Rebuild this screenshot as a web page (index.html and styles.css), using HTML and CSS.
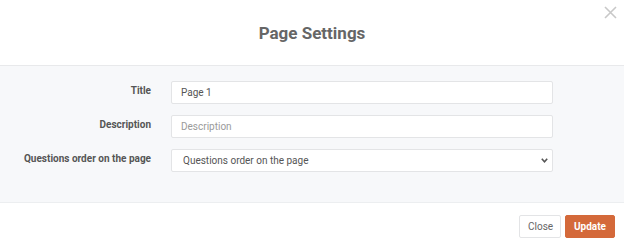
FILE: index.html
```html
<!DOCTYPE html>
<html lang="en">
<head>
    <meta charset="UTF-8">
    <meta name="viewport" content="width=device-width, initial-scale=1.0">
    <title>Page Settings</title>
    <link rel="stylesheet" href="styles.css">
</head>
<body>
    <div class="modal">
        <!-- Header -->
        <div class="modal-header">
            <h1>Page Settings</h1>
            <button class="close-x" aria-label="Close">
                <svg width="13" height="13" viewBox="0 0 13 13">
                    <path d="M1 1 L12 12 M12 1 L1 12" stroke="#c8c8c8" stroke-width="1.6" fill="none"/>
                </svg>
            </button>
        </div>

        <!-- Body -->
        <div class="modal-body">
            <form class="form-grid">
                <label for="title">Title</label>
                <input type="text" id="title" value="Page 1">

                <label for="description">Description</label>
                <input type="text" id="description" placeholder="Description">

                <label for="order">Questions order on the page</label>
                <div class="select-wrap">
                    <select id="order">
                        <option>Questions order on the page</option>
                    </select>
                    <svg class="chevron" width="7" height="5" viewBox="0 0 7 5">
                        <path d="M0.8 0.8 L3.5 3.8 L6.2 0.8" stroke="#555" stroke-width="1.6" fill="none"/>
                    </svg>
                </div>
            </form>
        </div>

        <!-- Footer -->
        <div class="modal-footer">
            <button class="btn btn-default">Close</button>
            <button class="btn btn-primary">Update</button>
        </div>
    </div>
</body>
</html>
```

FILE: styles.css
```css
/* General Styling */
body {
    margin: 0;
    padding: 0;
    font-family: Roboto, 'Liberation Sans', sans-serif;
    background-color: #ffffff;
}

.modal {
    width: 624px;
    height: 248px;
    display: flex;
    flex-direction: column;
}

/* Header */
.modal-header {
    position: relative;
    height: 65px;
    border-bottom: 1px solid #e8e9eb;
    display: flex;
    align-items: center;
    justify-content: center;
}

.modal-header h1 {
    margin: 0;
    font-size: 17px;
    font-weight: 700;
    color: #666666;
}

.close-x {
    position: absolute;
    top: 6px;
    right: 7px;
    border: none;
    background: none;
    padding: 0;
    width: 13px;
    height: 13px;
    cursor: pointer;
}

.close-x svg {
    display: block;
}

/* Body */
.modal-body {
    background-color: #f7f8fa;
    border-bottom: 1px solid #eceef0;
    padding: 15px 0 30px 0;
}

.form-grid {
    display: grid;
    grid-template-columns: 151px 382px;
    column-gap: 20px;
    row-gap: 11px;
    margin: 0;
}

.form-grid label {
    text-align: right;
    font-size: 10px;
    font-weight: 700;
    color: #555555;
    padding-top: 4px;
    white-space: nowrap;
}

.form-grid input,
.form-grid select {
    box-sizing: border-box;
    width: 100%;
    height: 23px;
    padding: 0 9px;
    border: 1px solid #e3e4e6;
    border-radius: 2px;
    background-color: #ffffff;
    font-family: Roboto, 'Liberation Sans', sans-serif;
    font-size: 10px;
    color: #555555;
    outline: none;
}

.form-grid input::placeholder {
    color: #9a9a9a;
}

.select-wrap {
    position: relative;
}

.form-grid select {
    -webkit-appearance: none;
    appearance: none;
    padding-left: 11px;
}

.chevron {
    position: absolute;
    right: 5px;
    top: 9px;
    pointer-events: none;
}

/* Footer */
.modal-footer {
    flex: 1;
    display: flex;
    justify-content: flex-end;
    align-items: flex-start;
    gap: 4px;
    padding: 12px 9px 0 0;
}

.btn {
    height: 23px;
    padding: 0 8px;
    border-radius: 2px;
    font-family: Roboto, 'Liberation Sans', sans-serif;
    font-size: 10px;
    cursor: pointer;
}

.btn-default {
    background-color: #ffffff;
    border: 1px solid #e3e4e6;
    color: #666666;
    width: 42px;
}

.btn-primary {
    background-color: #d4693a;
    border: 1px solid #d4693a;
    color: #ffffff;
    font-weight: 700;
    width: 50px;
}
```
